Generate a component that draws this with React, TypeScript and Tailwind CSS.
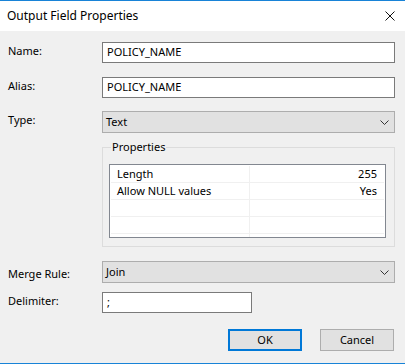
import React from 'react'

const font = { fontFamily: '"Noto Sans", "Segoe UI", sans-serif' }

function Chevron() {
  return (
    <svg width="9" height="5" viewBox="0 0 9 5" className="shrink-0">
      <polyline points="0.5,0.5 4.5,4.5 8.5,0.5" fill="none" stroke="#333" strokeWidth="1" />
    </svg>
  )
}

function TextBox({ value, className = '' }: { value: string; className?: string }) {
  return (
    <div className={`h-[21px] border border-[#7a7a7a] bg-white flex items-center pl-[4px] text-[#000] ${className}`}>
      {value}
    </div>
  )
}

function Combo({ value }: { value: string }) {
  return (
    <div className="h-[22px] w-[293px] border border-[#adadad] bg-[#e1e1e1] flex items-center justify-between pl-[3px] pr-[5px]">
      <span>{value}</span>
      <Chevron />
    </div>
  )
}

const rows = [
  ['Length', '255'],
  ['Allow NULL values', 'Yes'],
  ['', ''],
  ['', ''],
]

export default function App() {
  return (
    <div
      className="w-[405px] h-[364px] bg-[#f0f0f0] border-t border-b border-[#1883d7] flex flex-col text-[11px] text-black"
      style={font}
    >
      {/* title bar */}
      <div className="h-[30px] bg-white flex items-center justify-between pl-[7px] pr-[10px]">
        <span className="text-[12px]">Output Field Properties</span>
        <svg width="10" height="10" viewBox="0 0 10 10">
          <path d="M0.5 0.5 L9.5 9.5 M9.5 0.5 L0.5 9.5" stroke="#111" strokeWidth="1" />
        </svg>
      </div>

      <div className="flex flex-col pl-[8px]">
        <div className="flex mt-[11px]">
          <div className="w-[94px] pt-[1px]">Name:</div>
          <TextBox value="POLICY_NAME" className="w-[293px]" />
        </div>
        <div className="flex mt-[14px]">
          <div className="w-[94px] pt-[1px]">Alias:</div>
          <TextBox value="POLICY_NAME" className="w-[293px]" />
        </div>
        <div className="flex mt-[13px]">
          <div className="w-[94px] pt-[1px]">Type:</div>
          <Combo value="Text" />
        </div>

        {/* group box */}
        <div className="ml-[94px] mt-[14px] w-[293px] h-[100px] border border-[#dcdcdc] relative pt-[16px] pl-[6px]">
          <span className="absolute left-[8px] top-[-9px] bg-[#f0f0f0] px-[1px]">Properties</span>
          <div className="w-[277px] h-[74px] border border-[#828790] bg-white flex flex-col pt-[1px] px-[1px]">
            {rows.map((r, i) => (
              <div key={i} className="flex h-[17px] border-b border-[#f0f0f0]">
                <div className="w-[139px] border-r border-[#f0f0f0] pl-[6px] leading-[16px]">{r[0]}</div>
                <div className="flex-1 text-right pr-[7px] leading-[16px]">{r[1]}</div>
              </div>
            ))}
            <div className="flex flex-1">
              <div className="w-[139px] border-r border-[#f0f0f0]" />
            </div>
          </div>
        </div>

        <div className="flex mt-[14px]">
          <div className="w-[94px] pt-[5px]">Merge Rule:</div>
          <Combo value="Join" />
        </div>
        <div className="flex mt-[9px]">
          <div className="w-[94px] pt-[1px]">Delimiter:</div>
          <TextBox value=";" className="w-[150px]" />
        </div>
      </div>

      <div className="flex justify-end gap-[18px] pr-[11px] mt-[16px]">
        <button className="w-[74px] h-[22px] border-2 border-[#0078d7] bg-[#e1e1e1] text-[11px]" style={font}>
          OK
        </button>
        <button className="w-[74px] h-[22px] border border-[#adadad] bg-[#e1e1e1] text-[11px]" style={font}>
          Cancel
        </button>
      </div>
    </div>
  )
}
